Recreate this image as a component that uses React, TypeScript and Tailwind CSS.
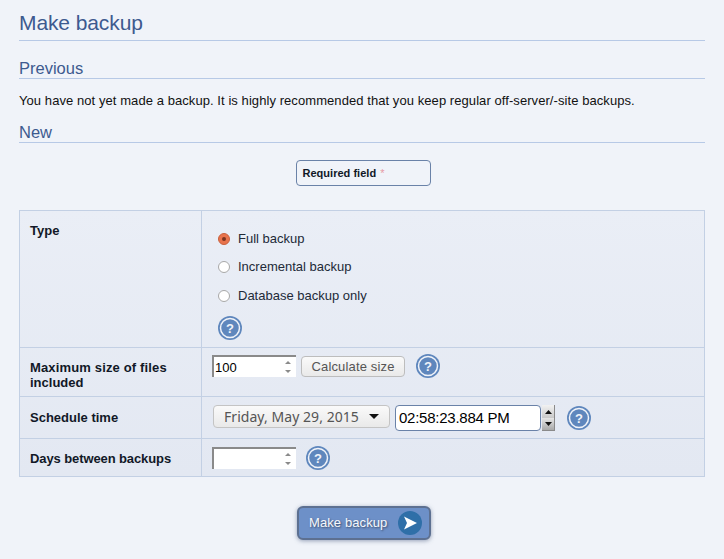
import React from 'react';

const HelpIcon: React.FC = () => (
  <svg width="24" height="24" viewBox="0 0 24 24" className="block shrink-0">
    <circle cx="12" cy="12" r="12" fill="#5f87bd" />
    <circle cx="12" cy="12" r="9.5" fill="#5f87bd" stroke="#f0f3f9" strokeWidth="1.5" />
    <text x="12" y="16.5" textAnchor="middle" fontSize="13" fontWeight="700" fill="#f0f3f9" fontFamily="Liberation Sans, sans-serif">?</text>
  </svg>
);

const Spinner: React.FC = () => (
  <svg width="8" height="14" viewBox="0 0 8 14" className="block">
    <path d="M4 1 7 4H1Z" fill="#8a8a8a" />
    <path d="M1 10h6l-3 3Z" fill="#8a8a8a" />
  </svg>
);

const NumberBox: React.FC<{ value?: string }> = ({ value }) => (
  <div className="flex h-[22px] w-[84px] items-center justify-between border-t-2 border-l-2 border-t-[#8a8a8a] border-l-[#8a8a8a] bg-white pr-[4px] text-[13px] leading-none text-black">
    <span className="pl-[1px]">{value}</span>
    <Spinner />
  </div>
);

const Heading: React.FC<{ children: React.ReactNode }> = ({ children }) => (
  <h2 className="border-b border-[#b7c9e6] text-[16.5px] leading-[18px] text-[#3d5a8f] relative">
    <span className="relative top-[-1px]">{children}</span>
  </h2>
);

const Radio: React.FC<{ label: string; checked?: boolean }> = ({ label, checked }) => (
  <div className="flex h-[16px] items-center gap-[8px]">
    {checked ? (
      <span className="flex size-[12px] items-center justify-center rounded-full border border-[#c9603c] bg-[#e8734c]">
        <span className="size-[4px] rounded-full bg-[#7a3420]" />
      </span>
    ) : (
      <span className="size-[12px] rounded-full border border-[#a8a8a8] bg-white" />
    )}
    <span className="text-[13px] text-[#222a38]">{label}</span>
  </div>
);

const rowLabel = 'w-[182px] shrink-0 border-r border-[#c3d0e4] pl-[10px] pr-[20px] text-[13px] font-bold leading-[15px] text-[#111827]';

export default function App() {
  return (
    <div className="h-[559px] overflow-hidden bg-[#f0f3f9] px-[19px] pt-[11px] font-['Liberation_Sans',Arial,sans-serif] text-[13px] text-[#111]">
      <h1 className="h-[30px] border-b border-[#b7c9e6] text-[21px] leading-[23px] tracking-[-0.1px] text-[#3d5a8f]">Make backup</h1>

      <div className="mt-[19px]">
        <Heading>Previous</Heading>
      </div>
      <p className="mt-[14px] leading-[15px] tracking-[0.07px]">You have not yet made a backup. It is highly recommended that you keep regular off-server/-site backups.</p>
      <div className="mt-[16px]">
        <Heading>New</Heading>
      </div>

      <div className="mt-[17px] flex justify-center pl-[2px]">
        <div className="flex h-[26px] w-[135px] items-start rounded-[4px] border border-[#6a82a8] px-[6px] pt-[4px] text-[11px] font-bold tracking-[0.02px] text-[#111827]">
          Required field <span className="ml-[4px] font-normal text-[#e79aa5]">*</span>
        </div>
      </div>

      <div className="mt-[24px] border border-[#c3d0e4] bg-gradient-to-b from-[#eaeef6] to-[#e3e8f2]">
        <div className="flex h-[137px] border-b border-[#c3d0e4]">
          <div className={`${rowLabel} pt-[12px]`}>Type</div>
          <div className="flex-1 pl-[16px] pt-[19.5px]">
            <div className="flex flex-col gap-[12.5px]">
              <Radio label="Full backup" checked />
              <Radio label="Incremental backup" />
              <Radio label="Database backup only" />
            </div>
            <div className="mt-[12.5px]">
              <HelpIcon />
            </div>
          </div>
        </div>

        <div className="flex h-[49px] border-b border-[#c3d0e4]">
          <div className={`${rowLabel} pt-[12px]`}>
            <span className="tracking-[0.15px]">Maximum size of files</span> included
          </div>
          <div className="flex flex-1 items-start pl-[10px] pt-[6px]">
            <div className="mt-[1px]">
              <NumberBox value="100" />
            </div>
            <button className="ml-[5px] mt-[2px] flex h-[21px] w-[104px] items-center justify-center rounded-[4px] border border-[#bdbdbd] bg-gradient-to-b from-[#fafafa] to-[#e9e9e9] text-[13px] tracking-[0.15px] text-[#555]">
              Calculate size
            </button>
            <div className="ml-[11px]">
              <HelpIcon />
            </div>
          </div>
        </div>

        <div className="flex h-[42px] border-b border-[#c3d0e4]">
          <div className={`${rowLabel} pt-[13px]`}>Schedule time</div>
          <div className="flex flex-1 items-start pl-[11px] pt-[8px]">
            <div className="flex h-[23px] w-[177px] items-center justify-between rounded-[4px] border border-[#c4c4c4] bg-gradient-to-b from-[#fafafa] to-[#e9e9e9] pl-[10px] pr-[10px] font-['Noto_Sans',sans-serif] text-[14px] tracking-[0.05px] text-[#555]">
              Friday, May 29, 2015
              <svg width="10" height="5" viewBox="0 0 10 5" className="block">
                <path d="M0 0h10L5 5Z" fill="#111" />
              </svg>
            </div>
            <div className="ml-[5px] flex h-[26px] w-[146px] items-center rounded-[4px] border border-[#6a82a8] bg-white pl-[3px] text-[15px] tracking-[-0.25px] text-black">
              02:58:23.884 PM
            </div>
            <div className="ml-[1px] flex w-[13px] flex-col">
              <div className="flex h-[13px] items-center justify-center border-r border-[#8a8a8a] bg-gradient-to-b from-[#f2f2f2] to-[#c9c9c9]">
                <svg width="7" height="4" viewBox="0 0 7 4" className="block">
                  <path d="M3.5 0 7 4H0Z" fill="#111" />
                </svg>
              </div>
              <div className="flex h-[13px] items-center justify-center border-r border-b border-[#8a8a8a] bg-gradient-to-b from-[#e6e6e6] to-[#a9a9a9]">
                <svg width="7" height="4" viewBox="0 0 7 4" className="block">
                  <path d="M0 0h7L3.500 4Z" fill="#111" />
                </svg>
              </div>
            </div>
            <div className="ml-[12px] mt-[1px]">
              <HelpIcon />
            </div>
          </div>
        </div>

        <div className="flex h-[37px]">
          <div className={`${rowLabel} pt-[12px] tracking-[-0.1px]`}>Days between backups</div>
          <div className="flex flex-1 items-start pl-[10px] pt-[8px]">
            <NumberBox />
            <div className="ml-[10px] mt-[-1px]">
              <HelpIcon />
            </div>
          </div>
        </div>
      </div>

      <div className="mt-[29px] flex justify-center pl-[4px]">
        <button className="flex h-[34px] w-[134px] items-center justify-between rounded-[6px] border-2 border-[#5d7091] bg-[#6d90c8] pl-[10px] pr-[7px] text-[13px] tracking-[0.1px] text-[#f4f7fc] shadow-[0_1px_4px_rgba(60,80,120,0.5)] [text-shadow:1px_1px_2px_#3a4a66]">
          Make backup
          <svg width="24" height="24" viewBox="0 0 24 24" className="block">
            <circle cx="12" cy="12" r="12" fill="#2f6fa8" />
            <path d="M6 5.500 19 12 6 18.500 9 12Z" fill="#fff" />
          </svg>
        </button>
      </div>
    </div>
  );
}
